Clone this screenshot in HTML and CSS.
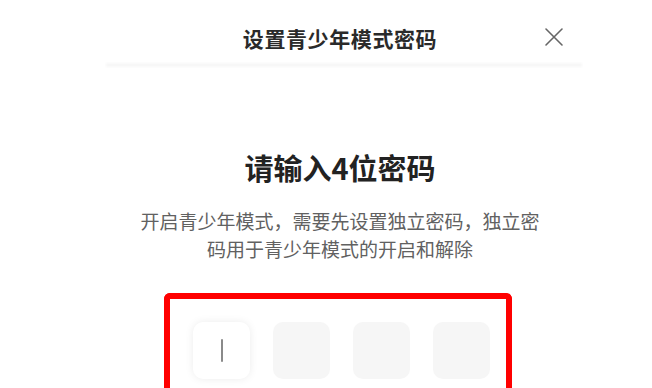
FILE: index.html
```html
<!DOCTYPE html>
<html lang="zh-CN">
<head>
<meta charset="utf-8">
<title>设置青少年模式密码</title>
<link rel="stylesheet" href="styles.css">
</head>
<body>
<div class="panel">
  <header class="header">
    <h1 class="title">设置青少年模式密码</h1>
    <button class="close" aria-label="关闭">
      <svg width="20" height="20" viewBox="0 0 20 20"><path d="M2 2 L18 18 M18 2 L2 18" stroke="#666" stroke-width="1.6" stroke-linecap="round" fill="none"/></svg>
    </button>
  </header>
  <div class="divider"></div>
  <main class="content">
    <h2 class="heading">请输入4位密码</h2>
    <p class="desc">开启青少年模式，需要先设置独立密码，独立密码用于青少年模式的开启和解除</p>
    <div class="mark">
      <div class="codes">
        <div class="cell active"><span class="cursor"></span></div>
        <div class="cell"></div>
        <div class="cell"></div>
        <div class="cell"></div>
      </div>
    </div>
  </main>
</div>
</body>
</html>
```
FILE: styles.css
```css
html, body {
  margin: 0;
  padding: 0;
  background: #ffffff;
  overflow: hidden;
}
body {
  font-family: "Noto Sans CJK SC", "Noto Sans", sans-serif;
  height: 388px;
}
.panel {
  width: 480px;
  margin-left: 100px;
}
.header {
  position: relative;
  display: flex;
  justify-content: center;
  padding-top: 24px;
  height: 39px;
}
.title {
  margin: 0;
  font-size: 21px;
  line-height: 28px;
  font-weight: 600;
  color: #2a2a2a;
  letter-spacing: 0.6px;
}
.close {
  position: absolute;
  right: 16px;
  top: 27px;
  width: 20px;
  height: 20px;
  padding: 0;
  border: 0;
  background: none;
  display: flex;
}
.divider {
  margin-left: 6px;
  width: 476px;
  height: 4px;
  background: #f7f7f7;
  filter: blur(1px);
}
.content {
  display: flex;
  flex-direction: column;
  align-items: center;
  padding-top: 81px;
}
.heading {
  margin: 0;
  font-size: 29px;
  line-height: 38px;
  font-weight: 700;
  color: #222;
}
.desc {
  margin: 21px 0 0;
  width: 400px;
  font-size: 19px;
  line-height: 28px;
  color: #616161;
  text-align: center;
}
.mark {
  align-self: flex-start;
  margin: 30px 0 0 64px;
  border: 6px solid #ff0000;
  border-bottom: 0;
  border-radius: 6px 6px 0 0;
  padding: 23px 16px 0 23px;
  height: 66px;
}
.codes {
  display: flex;
  gap: 23px;
}
.cell {
  width: 57px;
  height: 57px;
  border-radius: 10px;
  background: #f6f6f6;
  display: flex;
  align-items: center;
  justify-content: center;
}
.cell.active {
  background: #fff;
  box-shadow: 0 0 8px rgba(0, 0, 0, 0.08);
}
.cursor {
  width: 2px;
  height: 23px;
  background: #8a8a8a;
  border-radius: 1px;
}
```
